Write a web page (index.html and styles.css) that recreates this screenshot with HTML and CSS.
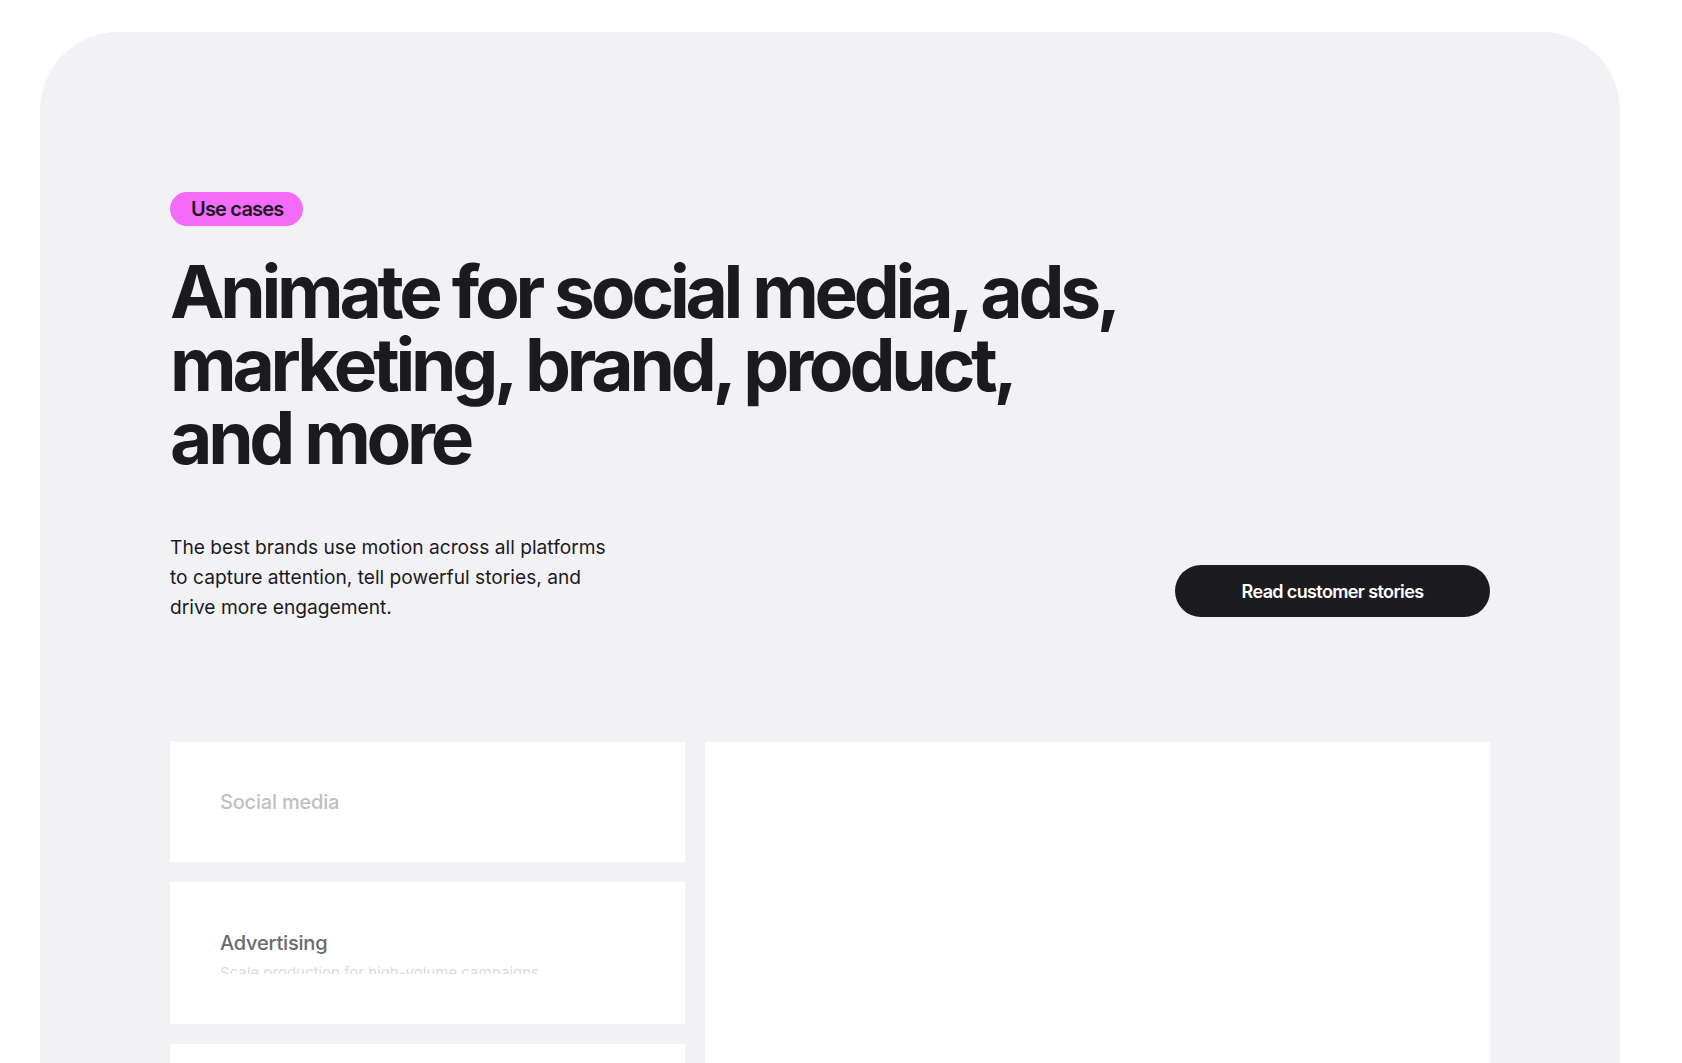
FILE: index.html
```html
<!DOCTYPE html>
<html lang="en">
<head>
<meta charset="utf-8">
<title>Use cases</title>
<link rel="stylesheet" href="styles.css">
</head>
<body>
<section class="panel">
  <span class="tag">Use cases</span>
  <h1 class="title">Animate for social media, ads, marketing, brand, product, and more</h1>
  <div class="intro">
    <p class="lead">The best brands use motion across all platforms to capture attention, tell powerful stories, and drive more engagement.</p>
    <a class="cta" href="#">Read customer stories</a>
  </div>
  <div class="cases">
    <div class="case-list">
      <div class="case case-short">
        <div class="case-name case-muted">Social media</div>
      </div>
      <div class="case case-open">
        <div class="case-name case-active">Advertising</div>
        <div class="case-reveal"><div class="case-desc">Scale production for high-volume campaigns</div></div>
      </div>
      <div class="case case-short"></div>
    </div>
    <div class="case-media"></div>
  </div>
</section>
</body>
</html>
```
FILE: styles.css
```css
html, body {
  margin: 0;
  padding: 0;
  background: #ffffff;
  font-family: Inter, "Noto Sans", sans-serif;
  color: #1b1a1f;
  overflow: hidden;
}

.panel {
  margin: 32px 0 0 40px;
  width: 1580px;
  min-height: 1100px;
  box-sizing: border-box;
  background: #f2f2f4;
  border-radius: 78px 78px 0 0;
  padding: 160px 130px 0 130px;
  display: flex;
  flex-direction: column;
  align-items: flex-start;
}

.tag {
  display: inline-flex;
  align-items: center;
  height: 34px;
  padding: 0 19px 0 21px;
  border-radius: 17px;
  background: #f46af9;
  font-size: 20px;
  font-weight: 600;
  letter-spacing: -0.04em;
  color: #1b1a1f;
}

.title {
  margin: 29px 0 0 0;
  width: 962px;
  font-size: 73px;
  line-height: 73px;
  font-weight: 700;
  letter-spacing: -0.058em;
  color: #1b1a1f;
}

.intro {
  margin-top: 58px;
  width: 100%;
  display: flex;
  justify-content: space-between;
  align-items: flex-end;
}

.lead {
  margin: 0;
  width: 445px;
  font-size: 19.2px;
  line-height: 30px;
  font-weight: 400;
  color: #1b1a1f;
}

.cta {
  display: flex;
  align-items: center;
  justify-content: center;
  width: 315px;
  height: 52px;
  margin-bottom: 5px;
  border-radius: 26px;
  background: #1c1b20;
  color: #ffffff;
  text-decoration: none;
  font-size: 18px;
  font-weight: 600;
  letter-spacing: -0.035em;
}

.cases {
  margin-top: 120px;
  width: 100%;
  display: grid;
  grid-template-columns: 515px 1fr;
  gap: 20px;
}

.case-list {
  display: flex;
  flex-direction: column;
  gap: 20px;
}

.case {
  background: #ffffff;
  padding: 0 50px;
  display: flex;
  flex-direction: column;
  justify-content: center;
}

.case-short {
  height: 120px;
}

.case-open {
  height: 142px;
  justify-content: flex-start;
  padding-top: 47px;
  box-sizing: border-box;
}

.case-name {
  font-size: 20px;
  line-height: 28px;
  font-weight: 500;
  letter-spacing: -0.01em;
}

.case-muted {
  color: #bfbfc2;
}

.case-active {
  color: #6a696e;
}

.case-reveal {
  height: 17px;
  overflow: hidden;
}

.case-desc {
  padding-top: 4px;
  font-size: 15px;
  line-height: 24px;
  color: #dcdcdf;
}

.case-media {
  background: #ffffff;
  min-height: 400px;
}
```
